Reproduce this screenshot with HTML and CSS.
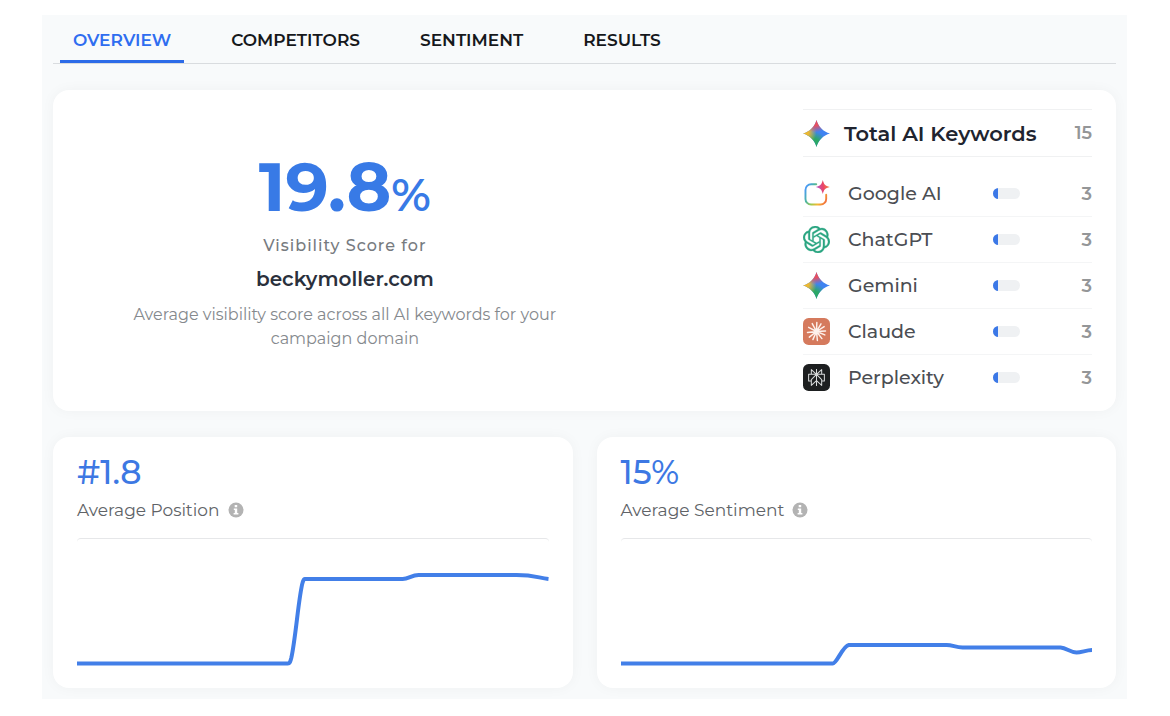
FILE: index.html
```html
<!DOCTYPE html>
<html lang="en">
<head>
<meta charset="utf-8">
<meta name="viewport" content="width=device-width, initial-scale=1">
<title>AI Visibility Overview</title>
<link rel="stylesheet" href="styles.css">
</head>
<body>
<svg class="defs" aria-hidden="true">
  <defs>
    <radialGradient id="g-red" cx="11" cy="0" r="11" gradientUnits="userSpaceOnUse"><stop offset="0.45" stop-color="#e8505f"/><stop offset="1" stop-color="#e8505f" stop-opacity="0"/></radialGradient>
    <radialGradient id="g-yellow" cx="0" cy="11" r="12" gradientUnits="userSpaceOnUse"><stop offset="0.4" stop-color="#efb92f"/><stop offset="1" stop-color="#efb92f" stop-opacity="0"/></radialGradient>
    <radialGradient id="g-green" cx="9" cy="23" r="13" gradientUnits="userSpaceOnUse"><stop offset="0.5" stop-color="#2ba866"/><stop offset="1" stop-color="#2ba866" stop-opacity="0"/></radialGradient>
    <linearGradient id="g-frame" x1="2" y1="8" x2="22" y2="18" gradientUnits="userSpaceOnUse"><stop offset="0" stop-color="#4a9af5"/><stop offset="0.25" stop-color="#4db6a0"/><stop offset="0.5" stop-color="#a5c94a"/><stop offset="0.72" stop-color="#f7b731"/><stop offset="1" stop-color="#f0663f"/></linearGradient>
    <linearGradient id="g-spark" x1="12" y1="8" x2="24" y2="6" gradientUnits="userSpaceOnUse"><stop offset="0" stop-color="#b55bd0"/><stop offset="0.5" stop-color="#ea4367"/><stop offset="1" stop-color="#f78a3c"/></linearGradient>
    <path id="star-shape" d="M12 0C13.600 6 18 10.400 24 12C18 13.600 13.600 18 12 24C10.400 18 6 13.600 0 12C6 10.400 10.400 6 12 0Z"/>
    <symbol id="gemini" viewBox="0 0 24 24">
      <use href="#star-shape" fill="#3f83f1"/>
      <use href="#star-shape" fill="url(#g-green)"/>
      <use href="#star-shape" fill="url(#g-yellow)"/>
      <use href="#star-shape" fill="url(#g-red)"/>
    </symbol>
    <symbol id="info" viewBox="0 0 16 16">
      <circle cx="8" cy="8" r="7.500" fill="#b3b3b3"/>
      <path fill="#fff" d="M6.700 3h2.500v2.200H6.700zM5.800 6.400h3.400v4.700h1.200v1.500H5.600v-1.500h1.200V7.900h-1z"/>
    </symbol>
  </defs>
</svg>

<main class="panel">
  <nav class="tabs" aria-label="Report sections">
    <a class="tab tab-active" href="#overview" aria-current="page">OVERVIEW</a>
    <a class="tab" href="#competitors">COMPETITORS</a>
    <a class="tab" href="#sentiment">SENTIMENT</a>
    <a class="tab" href="#results">RESULTS</a>
  </nav>

  <section class="card summary" id="overview">
    <div class="score">
      <p class="score-value">19.8<span class="score-unit">%</span></p>
      <p class="score-label">Visibility Score for</p>
      <h1 class="score-domain">beckymoller.com</h1>
      <p class="score-note">Average visibility score across all AI keywords for your campaign domain</p>
    </div>

    <div class="keywords">
      <div class="keywords-head">
        <svg class="icon" aria-hidden="true"><use href="#gemini"/></svg>
        <h2 class="keywords-title">Total AI Keywords</h2>
        <span class="count">15</span>
      </div>
      <ul class="engines">
        <li class="engine">
          <svg class="icon" viewBox="0 0 24 24" aria-hidden="true">
            <path fill="none" stroke="url(#g-frame)" stroke-width="1.700" stroke-linecap="round" d="M11.800 3.800H7.200A5 5 0 0 0 2.200 8.800V16.800A5 5 0 0 0 7.200 21.800H15.600A5 5 0 0 0 20.600 16.800V13"/>
            <path fill="url(#g-spark)" d="M17.600 0C18.600 4 19.800 5.200 23.800 6.200C19.800 7.200 18.600 8.400 17.600 12.400C16.600 8.400 15.400 7.200 11.400 6.200C15.400 5.200 16.600 4 17.600 0Z"/>
          </svg>
          <span class="engine-name">Google AI</span>
          <span class="meter"><span class="meter-fill"></span></span>
          <span class="count">3</span>
        </li>
        <li class="engine">
          <svg class="icon" viewBox="0 0 24 24" aria-hidden="true"><path fill="#2aa581" stroke="#2aa581" stroke-width="0.300" d="M22.2819 9.8211a5.9847 5.9847 0 0 0-.5157-4.9108 6.0462 6.0462 0 0 0-6.5098-2.9A6.0651 6.0651 0 0 0 4.9807 4.1818a5.9847 5.9847 0 0 0-3.9977 2.9 6.0462 6.0462 0 0 0 .7427 7.0966 5.98 5.98 0 0 0 .511 4.9107 6.051 6.051 0 0 0 6.5146 2.9001A5.9847 5.9847 0 0 0 13.2599 24a6.0557 6.0557 0 0 0 5.7718-4.2058 5.9894 5.9894 0 0 0 3.9977-2.9001 6.0557 6.0557 0 0 0-.7475-7.0729zm-9.022 12.6081a4.4755 4.4755 0 0 1-2.8764-1.0408l.1419-.0804 4.7783-2.7582a.7948.7948 0 0 0 .3927-.6813v-6.7369l2.02 1.1686a.071.071 0 0 1 .038.052v5.5826a4.504 4.504 0 0 1-4.4945 4.4944zm-9.6607-4.1254a4.4708 4.4708 0 0 1-.5346-3.0137l.142.0852 4.783 2.7582a.7712.7712 0 0 0 .7806 0l5.8428-3.3685v2.3324a.0804.0804 0 0 1-.0332.0615L9.74 19.9502a4.4992 4.4992 0 0 1-6.1408-1.6464zM2.3408 7.8956a4.485 4.485 0 0 1 2.3655-1.9728V11.6a.7664.7664 0 0 0 .3879.6765l5.8144 3.3543-2.0201 1.1685a.0757.0757 0 0 1-.071 0l-4.8303-2.7865A4.504 4.504 0 0 1 2.3408 7.872zm16.5963 3.8558L13.1038 8.364 15.1192 7.2a.0757.0757 0 0 1 .071 0l4.8303 2.7913a4.4944 4.4944 0 0 1-.6765 8.1042v-5.6772a.79.79 0 0 0-.407-.667zm2.0107-3.0231l-.142-.0852-4.7735-2.7818a.7759.7759 0 0 0-.7854 0L9.409 9.2297V6.8974a.0662.0662 0 0 1 .0284-.0615l4.8303-2.7866a4.4992 4.4992 0 0 1 6.6802 4.66zM8.3065 12.863l-2.02-1.1638a.0804.0804 0 0 1-.038-.0567V6.0742a4.4992 4.4992 0 0 1 7.3757-3.4537l-.142.0805L8.704 5.459a.7948.7948 0 0 0-.3927.6813zm1.0976-2.3654l2.602-1.4998 2.6069 1.4998v2.9994l-2.5974 1.4997-2.6067-1.4997Z"/></svg>
          <span class="engine-name">ChatGPT</span>
          <span class="meter"><span class="meter-fill"></span></span>
          <span class="count">3</span>
        </li>
        <li class="engine">
          <svg class="icon" aria-hidden="true"><use href="#gemini"/></svg>
          <span class="engine-name">Gemini</span>
          <span class="meter"><span class="meter-fill"></span></span>
          <span class="count">3</span>
        </li>
        <li class="engine">
          <svg class="icon" viewBox="0 0 24 24" aria-hidden="true">
            <rect width="24" height="24" rx="5" fill="#d57a5d"/>
            <path stroke="#fdf1ec" stroke-width="1.300" stroke-linecap="round" d="M12 12L12.300 4M12 12L16 5.200M12 12L18.800 7.600M12 12L20 11.500M12 12L19.400 15M12 12L16.800 18.300M12 12L12.800 20M12 12L8.800 19.200M12 12L5.600 17M12 12L4 12.800M12 12L5 8.300M12 12L8.200 5"/>
          </svg>
          <span class="engine-name">Claude</span>
          <span class="meter"><span class="meter-fill"></span></span>
          <span class="count">3</span>
        </li>
        <li class="engine">
          <svg class="icon" viewBox="0 0 24 24" aria-hidden="true">
            <rect width="24" height="24" rx="5" fill="#1d1f20"/>
            <path fill="none" stroke="#d8dada" stroke-width="0.900" stroke-linejoin="round" d="M12 4.500V19.500M12 9.200L7.400 5V9.200M12 9.200L16.600 5V9.200M7.400 9.200H5V15.200H7.400M16.600 9.200H19V15.200H16.600M5.500 9.200H18.500M12 9.200L7.400 13.800V19L12 14.800L16.600 19V13.800L12 9.200"/>
          </svg>
          <span class="engine-name">Perplexity</span>
          <span class="meter"><span class="meter-fill"></span></span>
          <span class="count">3</span>
        </li>
      </ul>
    </div>
  </section>

  <div class="metrics">
    <section class="card metric">
      <p class="metric-value">#1.8</p>
      <h2 class="metric-label">Average Position <svg class="info" aria-hidden="true"><use href="#info"/></svg></h2>
      <div class="chart">
        <svg class="chart-plot" viewBox="0 0 472 130" preserveAspectRatio="none" role="img" aria-label="Average position over time">
          <path class="line" d="M0 124.500H211C213 124.500 213.500 123 214.500 119C219 99 222 56 226 43Q227 40 228 40H326C332 40 335 36 342 36H440C458 36 462 39 472 40"/>
        </svg>
      </div>
    </section>
    <section class="card metric">
      <p class="metric-value">15%</p>
      <h2 class="metric-label">Average Sentiment <svg class="info" aria-hidden="true"><use href="#info"/></svg></h2>
      <div class="chart">
        <svg class="chart-plot" viewBox="0 0 472 130" preserveAspectRatio="none" role="img" aria-label="Average sentiment over time">
          <path class="line" d="M0 124.500H212C216 124.500 222 107 228 106H326C332 106 335 108.500 342 108.500H440C446 109 450 113.500 456 113.500C461 113.500 466 111 472 111"/>
        </svg>
      </div>
    </section>
  </div>
</main>
</body>
</html>
```
FILE: styles.css
```css
* {
  box-sizing: border-box;
}

body {
  margin: 0;
  padding: 15px 43px 17px 42px;
  background: #fff;
  color: #4d5258;
  font-family: Montserrat, Inter, "Open Sans", sans-serif;
}

h1, h2, p, ul {
  margin: 0;
  padding: 0;
  font-weight: 400;
}

ul {
  list-style: none;
}

.defs {
  position: absolute;
  width: 0;
  height: 0;
}

.panel {
  padding: 0 11px 11px;
  background: #f8fafb;
}

/* Tabs */
.tabs {
  display: flex;
  gap: 34px;
  padding-left: 7px;
  border-bottom: 1px solid #d9dcdf;
}

.tab {
  padding: 14px 13px 8px;
  border-bottom: 3px solid transparent;
  color: #16181b;
  font-size: 17px;
  font-weight: 600;
  line-height: 23px;
  text-decoration: none;
}

.tab-active {
  border-bottom-color: #2c6be8;
  color: #2f6df0;
}

/* Cards */
.card {
  border-radius: 16px;
  background: #fff;
  box-shadow: 0 0 14px rgba(40, 50, 60, 0.04);
}

.summary {
  display: grid;
  grid-template-columns: 19fr 17fr;
  margin-top: 26px;
  padding: 19px 24px 10px;
}

.score {
  padding-top: 42px;
  text-align: center;
}

.score-value {
  color: #387ae6;
  font-size: 68px;
  font-weight: 700;
  line-height: 72px;
}

.score-unit {
  font-size: 46px;
  font-weight: 600;
}

.score-label {
  margin-top: 3px;
  color: #777b80;
  font-size: 16px;
  font-weight: 500;
  letter-spacing: 1px;
  line-height: 24px;
}

.score-domain {
  margin-top: 8px;
  color: #2a303c;
  font-size: 20px;
  font-weight: 600;
  line-height: 26px;
}

.score-note {
  max-width: 440px;
  margin: 11px auto 0;
  color: #85898d;
  font-size: 16px;
  line-height: 24px;
}

/* Keyword totals */
.keywords {
  width: 289px;
  justify-self: end;
}

.keywords-head {
  display: flex;
  align-items: center;
  height: 48px;
  margin-bottom: 14px;
  border-top: 1px solid #f0f1f2;
  border-bottom: 1px solid #f0f1f2;
}

.icon {
  flex: none;
  width: 27px;
  height: 27px;
}

.keywords-title {
  margin-left: 14px;
  color: #20242f;
  font-size: 21px;
  font-weight: 600;
}

.count {
  margin-left: auto;
  color: #949698;
  font-size: 18px;
  font-weight: 600;
}

.engine {
  display: grid;
  grid-template-columns: 27px 144px 27px 1fr;
  align-items: center;
  height: 46px;
  border-bottom: 1px solid #f4f5f6;
}

.engine:last-child {
  border-bottom-color: transparent;
}

.engine-name {
  padding-left: 18px;
  color: #4b4e53;
  font-size: 19px;
  font-weight: 500;
}

.meter {
  width: 27px;
  height: 11px;
  margin-left: 19px;
  border-radius: 6px;
  background: #eff1f3;
  overflow: hidden;
}

.meter-fill {
  display: block;
  width: 20%;
  height: 100%;
  background: #3b78e7;
}

/* Metric cards */
.metrics {
  display: grid;
  grid-template-columns: 1fr 1fr;
  gap: 24px;
  margin-top: 26px;
}

.metric {
  padding: 14px 24px 19px;
}

.metric-value {
  color: #3d78e3;
  font-size: 33px;
  font-weight: 500;
  line-height: 42px;
}

.metric-label {
  display: flex;
  align-items: center;
  gap: 8px;
  margin-top: 5px;
  color: #606367;
  font-size: 17px;
  line-height: 24px;
}

.info {
  width: 16px;
  height: 16px;
}

.chart {
  margin-top: 16px;
  border-top: 1px solid #e6e7e9;
  border-radius: 4px;
}

.chart-plot {
  display: block;
  width: 100%;
  height: 130px;
}

.line {
  fill: none;
  stroke: #427fe8;
  stroke-width: 4px;
  stroke-linejoin: round;
  vector-effect: non-scaling-stroke;
}
```
